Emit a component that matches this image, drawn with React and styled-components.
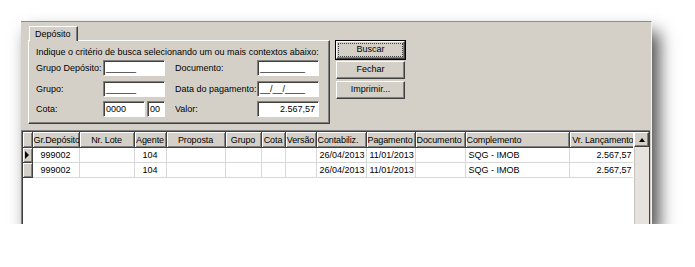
import React from "react";
import styled, { createGlobalStyle } from "styled-components";

const GlobalStyle = createGlobalStyle`
  body {
    margin: 0;
    background: #ffffff;
    font-family: "Liberation Sans", Arial, sans-serif;
    font-size: 9px;
    color: #000000;
  }
`;

const columns = [
  { title: "", width: 9 },
  { title: "Gr.Depósito", width: 47, align: "center" },
  { title: "Nr. Lote", width: 55, align: "center" },
  { title: "Agente", width: 32, align: "center" },
  { title: "Proposta", width: 59, align: "center" },
  { title: "Grupo", width: 36, align: "center" },
  { title: "Cota", width: 24, align: "center" },
  { title: "Versão", width: 31, align: "center" },
  { title: "Contabiliz.", width: 50, align: "left" },
  { title: "Pagamento", width: 49, align: "left" },
  { title: "Documento", width: 50, align: "left" },
  { title: "Complemento", width: 104, align: "left" },
  { title: "Vr. Lançamento", width: 66, align: "right" },
];

const rows = [
  ["999002", "", "104", "", "", "", "", "26/04/2013", "11/01/2013", "", "SQG - IMOB", "2.567,57"],
  ["999002", "", "104", "", "", "", "", "26/04/2013", "11/01/2013", "", "SQG - IMOB", "2.567,57"],
];

const App = () => {
  return (
    <>
      <GlobalStyle />
      <Window>
        <Top>
          <TabArea>
            <Tab>Depósito</Tab>
            <Sheet>
              <Intro>Indique o critério de busca selecionando um ou mais contextos abaixo:</Intro>
              <Fields>
                <Label>Grupo Depósito:</Label>
                <Input>______</Input>
                <Label>Documento:</Label>
                <Input>_________</Input>

                <Label>Grupo:</Label>
                <Input>______</Input>
                <Label>Data do pagamento:</Label>
                <Input>__/__/____</Input>

                <Label>Cota:</Label>
                <CotaPair>
                  <Input $w={42}>0000</Input>
                  <Input $w={18}>00</Input>
                </CotaPair>
                <Label>Valor:</Label>
                <Input $right>2.567,57</Input>
              </Fields>
            </Sheet>
          </TabArea>
          <Buttons>
            <Button $default>
              <Focus>Buscar</Focus>
            </Button>
            <Button>Fechar</Button>
            <Button>Imprimir...</Button>
          </Buttons>
        </Top>
        <Grid>
          <TableArea>
            <Table>
              <colgroup>
                {columns.map((c, i) => (
                  <col key={i} style={{ width: c.width }} />
                ))}
              </colgroup>
              <thead>
                <tr>
                  {columns.map((c, i) => (
                    <Head key={i} $align={c.align}>{c.title}</Head>
                  ))}
                </tr>
              </thead>
              <tbody>
                {rows.map((r, ri) => (
                  <tr key={ri}>
                    <Indicator>{ri === 0 && <Arrow />}</Indicator>
                    {r.map((v, ci) => (
                      <Cell key={ci} $align={columns[ci + 1].align}>{v}</Cell>
                    ))}
                  </tr>
                ))}
              </tbody>
            </Table>
          </TableArea>
          <ScrollBar>
            <ScrollButton>
              <UpArrow />
            </ScrollButton>
            <Track />
          </ScrollBar>
        </Grid>
      </Window>
    </>
  );
};

export default App;

const Window = styled.div`
  margin: 21px 0 0 21px;
  width: 631px;
  height: 203px;
  box-sizing: border-box;
  background: #d4d0c8;
  border-top: 1px solid #8c8c8c;
  border-right: 1px solid #f4f4f4;
  box-shadow: 7px 11px 16px rgba(0, 0, 0, 0.7);
  display: flex;
  flex-direction: column;
  overflow: hidden;
`;

const Top = styled.div`
  height: 108px;
  flex-shrink: 0;
  display: flex;
  padding: 4px 0 0 7px;
  box-sizing: border-box;
`;

const TabArea = styled.div`
  display: flex;
  flex-direction: column;
`;

const Tab = styled.div`
  align-self: flex-start;
  height: 15px;
  line-height: 14px;
  padding: 0 6px 0 5px;
  margin-left: 1px;
  border-top: 1px solid #ffffff;
  border-left: 1px solid #ffffff;
  border-right: 1px solid #404040;
  box-shadow: inset -1px 0 0 #808080;
  box-sizing: border-box;
  position: relative;
  z-index: 1;
  margin-bottom: -1px;
  background: #d4d0c8;
`;

const Sheet = styled.div`
  width: 302px;
  height: 84px;
  box-sizing: border-box;
  border-top: 1px solid #ffffff;
  border-left: 1px solid #ffffff;
  border-right: 1px solid #404040;
  border-bottom: 1px solid #404040;
  box-shadow: inset -1px -1px 0 #808080;
  padding: 4px 0 0 7px;
`;

const Intro = styled.div`
  height: 14px;
  line-height: 14px;
  white-space: nowrap;
`;

const Fields = styled.div`
  display: grid;
  grid-template-columns: 67px 72px 82px 62px;
  grid-auto-rows: 16px;
  row-gap: 4.5px;
  margin-top: 1px;
  align-items: center;
`;

const Label = styled.span`
  white-space: nowrap;
`;

const CotaPair = styled.div`
  display: flex;
  gap: 2px;
`;

const Input = styled.div`
  width: ${(p) => (p.$w ? `${p.$w}px` : "62px")};
  height: 16px;
  box-sizing: border-box;
  background: #ffffff;
  border-top: 1px solid #808080;
  border-left: 1px solid #808080;
  border-right: 1px solid #ffffff;
  border-bottom: 1px solid #ffffff;
  box-shadow: inset 1px 1px 0 #404040;
  padding: 0 3px 0 2px;
  line-height: 14px;
  text-align: ${(p) => (p.$right ? "right" : "left")};
  white-space: nowrap;
  overflow: hidden;
`;

const Buttons = styled.div`
  display: flex;
  flex-direction: column;
  gap: 2px;
  margin: 15px 0 0 6px;
`;

const Button = styled.div`
  width: 69px;
  height: 18px;
  box-sizing: border-box;
  text-align: center;
  line-height: 15px;
  border-top: 1px solid #ffffff;
  border-left: 1px solid #ffffff;
  border-right: 1px solid #404040;
  border-bottom: 1px solid #404040;
  box-shadow: inset -1px -1px 0 #808080;
  outline: ${(p) => (p.$default ? "1px solid #000000" : "none")};
  outline-offset: 0;
  padding: ${(p) => (p.$default ? "1px" : "0")};
`;

const Focus = styled.div`
  height: 12px;
  line-height: 11px;
  border: 1px dotted #404040;
`;

const Grid = styled.div`
  flex: 1;
  display: flex;
  margin: 0 1px 0 0;
  border-top: 1px solid #808080;
  border-left: 1px solid #808080;
  box-shadow: inset 1px 1px 0 #404040;
  padding: 1px 0 0 1px;
  background: #ffffff;
  min-height: 0;
`;

const TableArea = styled.div`
  flex: 1;
  overflow: hidden;
`;

const Table = styled.table`
  table-layout: fixed;
  border-collapse: collapse;
  width: 612px;
  font-size: 9px;
`;

const Head = styled.th`
  height: 15px;
  padding: 0 1px;
  font-weight: normal;
  text-align: ${(p) => p.$align || "center"};
  background: #d4d0c8;
  border-right: 1px solid #404040;
  border-bottom: 1px solid #404040;
  box-shadow: inset 1px 1px 0 #ffffff, inset -1px -1px 0 #808080;
  white-space: nowrap;
  overflow: hidden;
  line-height: 14px;
  letter-spacing: -0.1px;
`;

const Indicator = styled.td`
  height: 14px;
  padding: 0;
  background: #d4d0c8;
  border-right: 1px solid #404040;
  border-bottom: 1px solid #404040;
  box-shadow: inset 1px 1px 0 #ffffff, inset -1px -1px 0 #808080;
  position: relative;
`;

const Arrow = styled.span`
  position: absolute;
  left: 2px;
  top: 3px;
  width: 0;
  height: 0;
  border-top: 4px solid transparent;
  border-bottom: 4px solid transparent;
  border-left: 4px solid #000000;
`;

const Cell = styled.td`
  height: 14px;
  padding: 0 3px;
  text-align: ${(p) => p.$align || "left"};
  border-right: 1px solid #d8d8d8;
  border-bottom: 1px solid #d8d8d8;
  white-space: nowrap;
  overflow: hidden;
  line-height: 14px;
`;

const ScrollBar = styled.div`
  width: 15px;
  display: flex;
  flex-direction: column;
  margin-left: 1px;
  border-right: 1px solid #404040;
`;

const ScrollButton = styled.div`
  height: 15px;
  box-sizing: border-box;
  background: #d4d0c8;
  border-top: 1px solid #ffffff;
  border-left: 1px solid #ffffff;
  border-right: 1px solid #404040;
  border-bottom: 1px solid #404040;
  box-shadow: inset -1px -1px 0 #808080;
  display: flex;
  align-items: center;
  justify-content: center;
`;

const UpArrow = styled.span`
  width: 0;
  height: 0;
  border-left: 3.5px solid transparent;
  border-right: 3.5px solid transparent;
  border-bottom: 4px solid #000000;
`;

const Track = styled.div`
  flex: 1;
  background: #e6e3de;
  border-left: 1px solid #c8c4bc;
`;
